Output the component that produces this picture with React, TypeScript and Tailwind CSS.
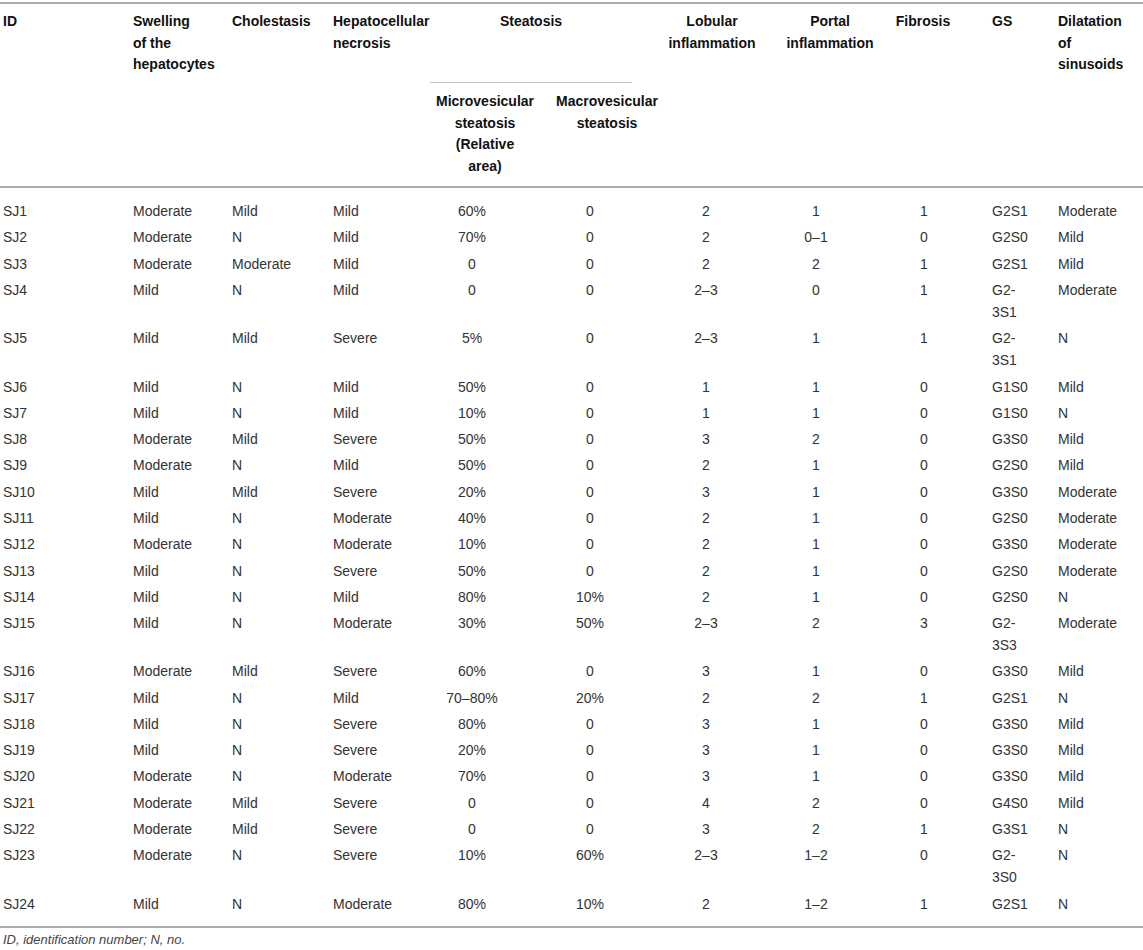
import React from "react";

const COLS =
  "grid grid-cols-[130px_99px_101px_99px_117px_122px_96px_116px_88px_87px_88px]";

const rows: string[][] = [
  ["SJ1", "Moderate", "Mild", "Mild", "60%", "0", "2", "1", "1", "G2S1", "Moderate"],
  ["SJ2", "Moderate", "N", "Mild", "70%", "0", "2", "0–1", "0", "G2S0", "Mild"],
  ["SJ3", "Moderate", "Moderate", "Mild", "0", "0", "2", "2", "1", "G2S1", "Mild"],
  ["SJ4", "Mild", "N", "Mild", "0", "0", "2–3", "0", "1", "G2-|3S1", "Moderate"],
  ["SJ5", "Mild", "Mild", "Severe", "5%", "0", "2–3", "1", "1", "G2-|3S1", "N"],
  ["SJ6", "Mild", "N", "Mild", "50%", "0", "1", "1", "0", "G1S0", "Mild"],
  ["SJ7", "Mild", "N", "Mild", "10%", "0", "1", "1", "0", "G1S0", "N"],
  ["SJ8", "Moderate", "Mild", "Severe", "50%", "0", "3", "2", "0", "G3S0", "Mild"],
  ["SJ9", "Moderate", "N", "Mild", "50%", "0", "2", "1", "0", "G2S0", "Mild"],
  ["SJ10", "Mild", "Mild", "Severe", "20%", "0", "3", "1", "0", "G3S0", "Moderate"],
  ["SJ11", "Mild", "N", "Moderate", "40%", "0", "2", "1", "0", "G2S0", "Moderate"],
  ["SJ12", "Moderate", "N", "Moderate", "10%", "0", "2", "1", "0", "G3S0", "Moderate"],
  ["SJ13", "Mild", "N", "Severe", "50%", "0", "2", "1", "0", "G2S0", "Moderate"],
  ["SJ14", "Mild", "N", "Mild", "80%", "10%", "2", "1", "0", "G2S0", "N"],
  ["SJ15", "Mild", "N", "Moderate", "30%", "50%", "2–3", "2", "3", "G2-|3S3", "Moderate"],
  ["SJ16", "Moderate", "Mild", "Severe", "60%", "0", "3", "1", "0", "G3S0", "Mild"],
  ["SJ17", "Mild", "N", "Mild", "70–80%", "20%", "2", "2", "1", "G2S1", "N"],
  ["SJ18", "Mild", "N", "Severe", "80%", "0", "3", "1", "0", "G3S0", "Mild"],
  ["SJ19", "Mild", "N", "Severe", "20%", "0", "3", "1", "0", "G3S0", "Mild"],
  ["SJ20", "Moderate", "N", "Moderate", "70%", "0", "3", "1", "0", "G3S0", "Mild"],
  ["SJ21", "Moderate", "Mild", "Severe", "0", "0", "4", "2", "0", "G4S0", "Mild"],
  ["SJ22", "Moderate", "Mild", "Severe", "0", "0", "3", "2", "1", "G3S1", "N"],
  ["SJ23", "Moderate", "N", "Severe", "10%", "60%", "2–3", "1–2", "0", "G2-|3S0", "N"],
  ["SJ24", "Mild", "N", "Moderate", "80%", "10%", "2", "1–2", "1", "G2S1", "N"],
];

const cellCls = [
  "pl-[3px] text-left",
  "pl-[3px] text-left",
  "pl-[3px] text-left",
  "pl-[3px] text-left",
  "pr-[31px] text-center",
  "pr-[34px] text-center",
  "pr-[20px] text-center",
  "pr-[12px] text-center",
  "text-center",
  "pl-[24px] text-left",
  "pl-[3px] text-left",
];

function Cell({ v, cls }: { v: string; cls: string }) {
  const parts = v.split("|");
  return (
    <div className={`${cls} py-[2.15px] whitespace-nowrap`}>
      {parts.map((p, i) => (
        <React.Fragment key={i}>
          {i > 0 && <br />}
          {p}
        </React.Fragment>
      ))}
    </div>
  );
}

export default function App() {
  return (
    <div
      className="w-[1143px] h-[950px] bg-white pt-[2px] text-[#333]"
      style={{ fontFamily: '"Liberation Sans", Arial, sans-serif' }}
    >
      {/* Header */}
      <div
        className={`${COLS} grid-rows-[79px_103px] border-t-2 border-b-2 border-[#ababab] text-[14px] font-bold leading-[21.6px] text-[#111]`}
      >
        <div className="row-span-2 pl-[3px] pt-[7px]">ID</div>
        <div className="row-span-2 pl-[3px] pt-[7px] whitespace-nowrap">
          Swelling
          <br />
          of the
          <br />
          hepatocytes
        </div>
        <div className="row-span-2 pl-[3px] pt-[7px] whitespace-nowrap">Cholestasis</div>
        <div className="row-span-2 pl-[3px] pt-[7px] whitespace-nowrap">
          Hepatocellular
          <br />
          necrosis
        </div>
        <div className="col-span-2 pl-[1px] pr-[36px]">
          <div className="h-full border-b border-[#c4c4c4] pt-[7px] text-center">Steatosis</div>
        </div>
        <div className="row-span-2 pt-[7px] pr-[8px] text-center whitespace-nowrap">
          Lobular
          <br />
          inflammation
        </div>
        <div className="row-span-2 pt-[7px] pl-[16px] text-center whitespace-nowrap">
          Portal
          <br />
          inflammation
        </div>
        <div className="row-span-2 pt-[7px] pr-[2px] text-center">Fibrosis</div>
        <div className="row-span-2 pt-[7px] pl-[24px]">GS</div>
        <div className="row-span-2 pt-[7px] pl-[3px] whitespace-nowrap">
          Dilatation
          <br />
          of
          <br />
          sinusoids
        </div>
        <div className="pt-[8px] pr-[5px] text-center whitespace-nowrap">
          Microvesicular
          <br />
          steatosis
          <br />
          (Relative
          <br />
          area)
        </div>
        <div className="pt-[8px] text-center whitespace-nowrap">
          Macrovesicular
          <br />
          steatosis
        </div>
      </div>

      {/* Body */}
      <div className="pt-[10px] pb-[9px] border-b-2 border-[#ababab] text-[14px] leading-[22px]">
        {rows.map((r) => (
          <div key={r[0]} className={COLS}>
            {r.map((v, i) => (
              <Cell key={i} v={v} cls={cellCls[i]} />
            ))}
          </div>
        ))}
      </div>

      <div className="mt-[4px] pl-[3px] text-[13px] italic leading-[16px] text-[#444]">
        ID, identification number; N, no.
      </div>
    </div>
  );
}
